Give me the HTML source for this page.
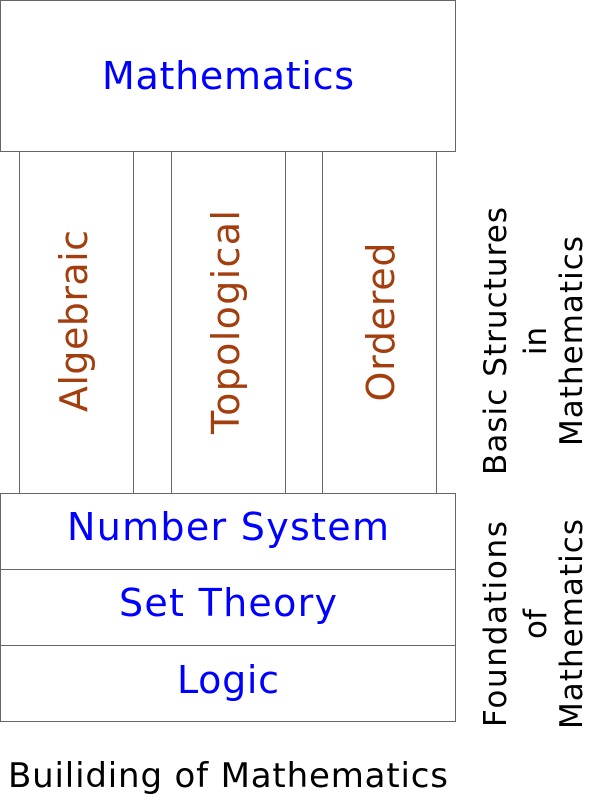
<!DOCTYPE html>
<html><head><meta charset="utf-8"><style>
html,body{margin:0;padding:0;background:#fff;width:593px;height:806px;overflow:hidden}
svg{display:block}
text{font-family:"DejaVu Sans","Liberation Sans",sans-serif}
</style></head><body>
<svg width="593" height="806" viewBox="0 0 593 806" xmlns="http://www.w3.org/2000/svg">
<g fill="#fff" stroke="#666" stroke-width="1">
<rect x="0.5" y="0.5" width="455" height="151"/>
<rect x="19.5" y="151.5" width="114" height="342"/>
<rect x="171.5" y="151.5" width="114" height="342"/>
<rect x="322.5" y="151.5" width="114" height="342"/>
<rect x="0.5" y="493.5" width="455" height="76"/>
<rect x="0.5" y="569.5" width="455" height="76"/>
<rect x="0.5" y="645.5" width="455" height="76"/>
</g>
<g fill="#0000ff" text-anchor="middle" font-size="38">
<text x="228" y="89" textLength="252" lengthAdjust="spacing">Mathematics</text>
<text x="228" y="540" textLength="322" lengthAdjust="spacing">Number System</text>
<text x="228" y="616" textLength="218" lengthAdjust="spacing">Set Theory</text>
<text x="228" y="693" textLength="102" lengthAdjust="spacing">Logic</text>
</g>
<g fill="#a33f0f" text-anchor="middle" font-size="38">
<text transform="translate(87,321) rotate(-90)" textLength="182" lengthAdjust="spacing">Algebraic</text>
<text transform="translate(239,322) rotate(-90)" textLength="224" lengthAdjust="spacing">Topological</text>
<text transform="translate(394,322) rotate(-90)" textLength="159" lengthAdjust="spacing">Ordered</text>
</g>
<g fill="#000" text-anchor="middle" font-size="31">
<text transform="translate(506,341) rotate(-90)" textLength="268" lengthAdjust="spacing">Basic Structures</text>
<text transform="translate(546,341) rotate(-90)">in</text>
<text transform="translate(582,341) rotate(-90)" textLength="210" lengthAdjust="spacing">Mathematics</text>
<text transform="translate(506,624) rotate(-90)" textLength="206" lengthAdjust="spacing">Foundations</text>
<text transform="translate(546,624) rotate(-90)">of</text>
<text transform="translate(582,624) rotate(-90)" textLength="210" lengthAdjust="spacing">Mathematics</text>
<text x="228" y="787" font-size="34" textLength="440" lengthAdjust="spacing">Builiding of Mathematics</text>
</g>
</svg>
</body></html>
